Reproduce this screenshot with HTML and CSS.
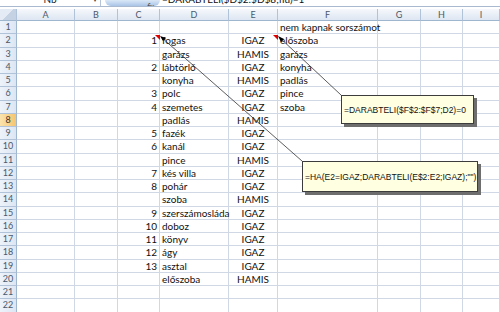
FILE: index.html
```html
<!DOCTYPE html>
<html>
  <head>
    <link rel="stylesheet" href="styles.css">
  </head>
  <body>
    <div class="page">
      <!-- formula bar, only its lower edge is visible -->
      <div class="formula-bar">
        <div class="name-box">Nb<span class="drop">▾</span></div>
        <div class="fx-button"><span class="fx">fx</span></div>
        <div class="formula">=DARABTELI($D$2:$D$8;fiú)=1</div>
      </div>

      <div class="sheet">
        <div class="row head">
          <div class="corner"></div>
          <div>A</div><div>B</div><div>C</div><div>D</div><div>E</div>
          <div>F</div><div>G</div><div>H</div><div>I</div>
        </div>
        <div class="row"><div class="num">1</div><div></div><div></div><div></div><div></div><div></div><div class="txt over">nem kapnak sorszámot</div><div></div><div></div><div></div></div>
        <div class="row"><div class="num">2</div><div></div><div></div><div class="nr">1</div><div class="txt">fogas</div><div class="bool">IGAZ</div><div class="txt">előszoba</div><div></div><div></div><div></div></div>
        <div class="row"><div class="num">3</div><div></div><div></div><div class="nr"></div><div class="txt">garázs</div><div class="bool">HAMIS</div><div class="txt">garázs</div><div></div><div></div><div></div></div>
        <div class="row"><div class="num">4</div><div></div><div></div><div class="nr">2</div><div class="txt">lábtörlő</div><div class="bool">IGAZ</div><div class="txt">konyha</div><div></div><div></div><div></div></div>
        <div class="row"><div class="num">5</div><div></div><div></div><div class="nr"></div><div class="txt">konyha</div><div class="bool">HAMIS</div><div class="txt">padlás</div><div></div><div></div><div></div></div>
        <div class="row"><div class="num">6</div><div></div><div></div><div class="nr">3</div><div class="txt">polc</div><div class="bool">IGAZ</div><div class="txt">pince</div><div></div><div></div><div></div></div>
        <div class="row"><div class="num">7</div><div></div><div></div><div class="nr">4</div><div class="txt">szemetes</div><div class="bool">IGAZ</div><div class="txt">szoba</div><div></div><div></div><div></div></div>
        <div class="row"><div class="num active">8</div><div></div><div></div><div class="nr"></div><div class="txt">padlás</div><div class="bool">HAMIS</div><div></div><div></div><div></div><div></div></div>
        <div class="row"><div class="num">9</div><div></div><div></div><div class="nr">5</div><div class="txt">fazék</div><div class="bool">IGAZ</div><div></div><div></div><div></div><div></div></div>
        <div class="row"><div class="num">10</div><div></div><div></div><div class="nr">6</div><div class="txt">kanál</div><div class="bool">IGAZ</div><div></div><div></div><div></div><div></div></div>
        <div class="row"><div class="num">11</div><div></div><div></div><div class="nr"></div><div class="txt">pince</div><div class="bool">HAMIS</div><div></div><div></div><div></div><div></div></div>
        <div class="row"><div class="num">12</div><div></div><div></div><div class="nr">7</div><div class="txt">kés villa</div><div class="bool">IGAZ</div><div></div><div></div><div></div><div></div></div>
        <div class="row"><div class="num">13</div><div></div><div></div><div class="nr">8</div><div class="txt">pohár</div><div class="bool">IGAZ</div><div></div><div></div><div></div><div></div></div>
        <div class="row"><div class="num">14</div><div></div><div></div><div class="nr"></div><div class="txt">szoba</div><div class="bool">HAMIS</div><div></div><div></div><div></div><div></div></div>
        <div class="row"><div class="num">15</div><div></div><div></div><div class="nr">9</div><div class="txt">szerszámosláda</div><div class="bool">IGAZ</div><div></div><div></div><div></div><div></div></div>
        <div class="row"><div class="num">16</div><div></div><div></div><div class="nr">10</div><div class="txt">doboz</div><div class="bool">IGAZ</div><div></div><div></div><div></div><div></div></div>
        <div class="row"><div class="num">17</div><div></div><div></div><div class="nr">11</div><div class="txt">könyv</div><div class="bool">IGAZ</div><div></div><div></div><div></div><div></div></div>
        <div class="row"><div class="num">18</div><div></div><div></div><div class="nr">12</div><div class="txt">ágy</div><div class="bool">IGAZ</div><div></div><div></div><div></div><div></div></div>
        <div class="row"><div class="num">19</div><div></div><div></div><div class="nr">13</div><div class="txt">asztal</div><div class="bool">IGAZ</div><div></div><div></div><div></div><div></div></div>
        <div class="row"><div class="num">20</div><div></div><div></div><div class="nr"></div><div class="txt">előszoba</div><div class="bool">HAMIS</div><div></div><div></div><div></div><div></div></div>
        <div class="row"><div class="num">21</div><div></div><div></div><div></div><div></div><div></div><div></div><div></div><div></div><div></div></div>
        <div class="row"><div class="num">22</div><div></div><div></div><div></div><div></div><div></div><div></div><div></div><div></div><div></div></div>
      </div>

      <!-- comment indicators and callout lines -->
      <svg class="callouts" width="500" height="312" viewBox="0 0 500 312">
        <polygon points="155,35 160,35 160,40" fill="#e00000" />
        <polygon points="273,35 278,35 278,40" fill="#e00000" />
        <line x1="341" y1="95" x2="279" y2="37" stroke="#333" stroke-width="0.8" />
        <polygon points="278,36 284,39 281,42" fill="#000" />
        <line x1="302" y1="161" x2="161" y2="37" stroke="#333" stroke-width="0.8" />
        <polygon points="160,36 166,38 163,41" fill="#000" />
      </svg>

      <div class="comment c1">=DARABTELI($F$2:$F$7;D2)=0</div>
      <div class="comment c2">=HA(E2=IGAZ;DARABTELI(E$2:E2;IGAZ);"")</div>
    </div>
  </body>
</html>
```

FILE: styles.css
```css
/* sheet styles */
body {
  margin: 0;
  background-color: #ffffff;
  font-family: Lato, "Liberation Sans", sans-serif;
}

.page {
  position: relative;
  width: 500px;
  height: 312px;
  overflow: hidden;
}

.formula-bar {
  display: flex;
  height: 6px;
  overflow: hidden;
  border-bottom: 1px solid #a9b9cf;
  margin-bottom: 2px;
  font-size: 10px;
}

.name-box {
  width: 100px;
  line-height: 10px;
  margin-top: -6px;
  text-align: center;
  color: #222;
  position: relative;
  border-right: 1px solid #b5c4d8;
}

.drop {
  position: absolute;
  right: 3px;
  font-size: 8px;
  color: #444;
}

.fx-button {
  width: 55px;
  margin-left: 4px;
  border-radius: 0 0 8px 8px;
  background: linear-gradient(#dbe8f7, #a9c4e6);
  text-align: right;
}

.fx {
  display: inline-block;
  margin-top: -6px;
  margin-right: 6px;
  font-style: italic;
  font-size: 9px;
  color: #555;
}

.formula {
  flex: 1;
  padding-left: 2px;
  line-height: 10px;
  margin-top: -6px;
  color: #111;
  white-space: nowrap;
}

.sheet {
  font-size: 10px;
  color: #111;
}

.row {
  display: grid;
  grid-template-columns: 17px 58px 43px 42px 69px 49px 100px 43px 42px 37px;
  height: 13.25px;
}

.row > div {
  box-sizing: border-box;
  border-right: 1px solid #d0d7e5;
  border-bottom: 1px solid #d0d7e5;
  line-height: 12px;
  white-space: nowrap;
}

.row.head {
  height: 12px;
}

.row.head > div {
  background: linear-gradient(#f6f8fc, #dde6f2);
  border-right: 1px solid #b1c3d9;
  border-bottom: 1px solid #9eb6ce;
  color: #4c5868;
  font-size: 9px;
  line-height: 11px;
  text-align: center;
}

.row.head > .corner {
  background: linear-gradient(135deg, #e4ebf5 50%, #c4d2e4 50%);
}

.row > .num {
  background: linear-gradient(90deg, #eef3fa, #dce6f3);
  border-right: 1px solid #9eb6ce;
  border-bottom: 1px solid #b1c3d9;
  color: #4c5868;
  font-size: 9px;
  text-align: center;
}

.row > .num.active {
  background: linear-gradient(90deg, #fbe3ad, #f5c56e);
  color: #333;
}

.nr {
  text-align: right;
  padding-right: 2px;
}

.txt {
  padding-left: 2px;
}

.over {
  overflow: visible;
  position: relative;
  z-index: 1;
}

.bool {
  text-align: center;
}

.callouts {
  position: absolute;
  left: 0;
  top: 0;
  pointer-events: none;
}

.comment {
  position: absolute;
  box-sizing: border-box;
  background-color: #ffffe1;
  border: 1px solid #3c3c3c;
  box-shadow: 3px 3px 0 #6e6e6e;
  font-family: "Liberation Sans", sans-serif;
  font-size: 8.5px;
  color: #111;
  padding-left: 2px;
  display: flex;
  align-items: center;
  white-space: nowrap;
}

.c1 {
  left: 341px;
  top: 95px;
  width: 133px;
  height: 29px;
}

.c2 {
  left: 302px;
  top: 161px;
  width: 176px;
  height: 31px;
}
```
